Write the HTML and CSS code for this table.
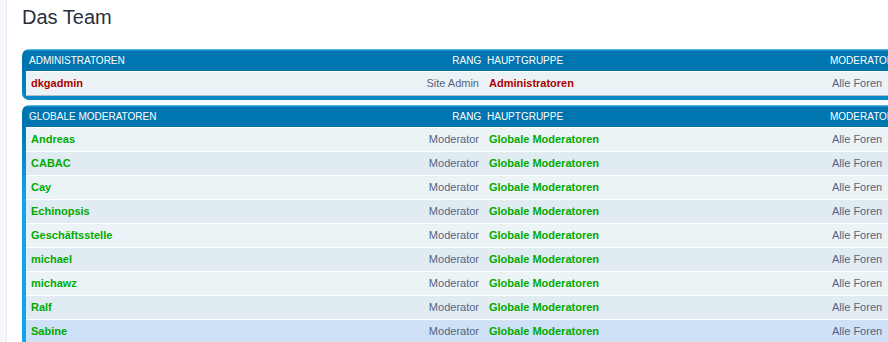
FILE: index.html
```html
<!DOCTYPE html>
<html lang="de">
<head>
<meta charset="utf-8">
<title>Das Team</title>
<link rel="stylesheet" href="styles.css">
</head>
<body>
<div class="wrap">
  <h2 class="page-title">Das Team</h2>

  <div class="forumbg">
    <table class="table1">
      <colgroup><col class="c-name"><col class="c-info"><col class="c-info"></colgroup>
      <thead>
        <tr>
          <th class="name"><span class="rank-img">Rang&nbsp;</span>Administratoren</th>
          <th class="info">Hauptgruppe</th>
          <th class="info">Moderatoren</th>
        </tr>
      </thead>
      <tbody>
        <tr class="bg1 last">
          <td><span class="rank-img">Site Admin</span><a class="user admin">dkgadmin</a></td>
          <td class="info"><a class="user admin">Administratoren</a></td>
          <td class="info">Alle Foren</td>
        </tr>
      </tbody>
    </table>
  </div>

  <div class="forumbg">
    <table class="table1">
      <colgroup><col class="c-name"><col class="c-info"><col class="c-info"></colgroup>
      <thead>
        <tr>
          <th class="name"><span class="rank-img">Rang&nbsp;</span>Globale Moderatoren</th>
          <th class="info">Hauptgruppe</th>
          <th class="info">Moderatoren</th>
        </tr>
      </thead>
      <tbody>
        <tr class="bg1"><td><span class="rank-img">Moderator</span><a class="user gmod">Andreas</a></td><td class="info"><a class="user gmod">Globale Moderatoren</a></td><td class="info">Alle Foren</td></tr>
        <tr class="bg2"><td><span class="rank-img">Moderator</span><a class="user gmod">CABAC</a></td><td class="info"><a class="user gmod">Globale Moderatoren</a></td><td class="info">Alle Foren</td></tr>
        <tr class="bg1"><td><span class="rank-img">Moderator</span><a class="user gmod">Cay</a></td><td class="info"><a class="user gmod">Globale Moderatoren</a></td><td class="info">Alle Foren</td></tr>
        <tr class="bg2"><td><span class="rank-img">Moderator</span><a class="user gmod">Echinopsis</a></td><td class="info"><a class="user gmod">Globale Moderatoren</a></td><td class="info">Alle Foren</td></tr>
        <tr class="bg1"><td><span class="rank-img">Moderator</span><a class="user gmod">Geschäftsstelle</a></td><td class="info"><a class="user gmod">Globale Moderatoren</a></td><td class="info">Alle Foren</td></tr>
        <tr class="bg2"><td><span class="rank-img">Moderator</span><a class="user gmod">michael</a></td><td class="info"><a class="user gmod">Globale Moderatoren</a></td><td class="info">Alle Foren</td></tr>
        <tr class="bg1"><td><span class="rank-img">Moderator</span><a class="user gmod">michawz</a></td><td class="info"><a class="user gmod">Globale Moderatoren</a></td><td class="info">Alle Foren</td></tr>
        <tr class="bg2"><td><span class="rank-img">Moderator</span><a class="user gmod">Ralf</a></td><td class="info"><a class="user gmod">Globale Moderatoren</a></td><td class="info">Alle Foren</td></tr>
        <tr class="hover"><td><span class="rank-img">Moderator</span><a class="user gmod">Sabine</a></td><td class="info"><a class="user gmod">Globale Moderatoren</a></td><td class="info">Alle Foren</td></tr>
      </tbody>
    </table>
  </div>
</div>
</body>
</html>
```

FILE: styles.css
```css
html, body {
  margin: 0;
  padding: 0;
  overflow: hidden;
}

body {
  background: #F5F7FA;
  font-family: "Liberation Sans", Arial, sans-serif;
  color: #536482;
}

.wrap {
  margin-left: 6px;
  border-left: 1px solid #E6E9ED;
  background: #FFFFFF;
  padding: 6px 15px 20px 15px;
  width: max-content;
  min-height: 400px;
}

.page-title {
  margin: 0 0 20px 0;
  font-size: 20px;
  line-height: 23px;
  font-weight: normal;
  color: #28313F;
}

.forumbg {
  width: max-content;
  padding: 4px;
  margin-bottom: 5px;
  border-radius: 7px;
  background-color: #12A3EB;
  background-image: linear-gradient(to bottom, #6ACEFF 0%, #0076B1 2px, #0076B1 20px, #12A3EB 92px, #12A3EB 100%);
}

.table1 {
  width: 1144px;
  table-layout: fixed;
  border-collapse: separate;
  border-spacing: 0;
}

.c-name { width: 458px; }
.c-info { width: 343px; }

.table1 th {
  padding: 1px 0 3px 3px;
  font-size: 10px;
  line-height: 14px;
  font-weight: normal;
  text-transform: uppercase;
  text-align: left;
  color: #FFFFFF;
  white-space: nowrap;
}

.table1 td {
  padding: 5px;
  font-size: 11px;
  line-height: 13px;
  border-top: 1px solid #FFFFFF;
  color: #536482;
  white-space: nowrap;
}

.table1 tr.last td {
  border-bottom: 1px solid #B4BEC8;
}

.rank-img {
  float: right;
}

.bg1 td { background-color: #ECF3F7; }
.bg2 td { background-color: #E1EBF2; }
.hover td { background-color: #CFE1F6; }

.user {
  font-weight: bold;
  text-decoration: none;
}

.admin { color: #AA0000; }
.gmod { color: #00AA00; }
```
